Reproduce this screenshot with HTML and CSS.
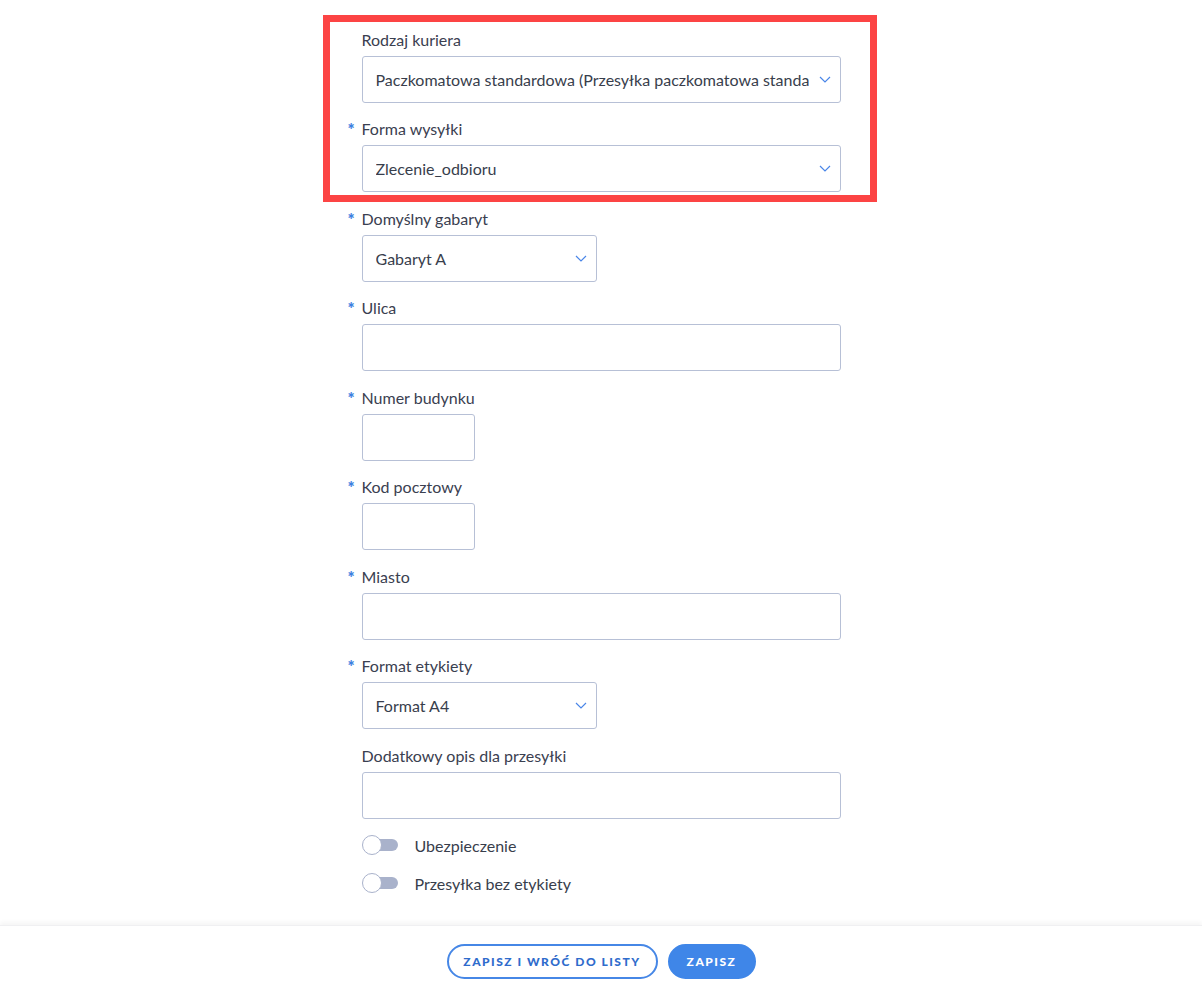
FILE: index.html
```html
<!DOCTYPE html>
<html lang="pl">
<head>
<meta charset="utf-8">
<title>Formularz</title>
<link rel="stylesheet" href="styles.css">
</head>
<body>
<div class="page">
  <form class="form">
    <div class="field">
      <label class="label">Rodzaj kuriera</label>
      <div class="select full">
        <span class="select-text">Paczkomatowa standardowa (Przesyłka paczkomatowa standardowa)</span>
        <svg class="chev" width="12" height="7" viewBox="0 0 12 7"><path d="M1 1l5 5 5-5" fill="none" stroke="#4a86e8" stroke-width="1.2"/></svg>
      </div>
    </div>
    <div class="field">
      <label class="label req">Forma wysyłki</label>
      <div class="select full">
        <span class="select-text">Zlecenie_odbioru</span>
        <svg class="chev" width="12" height="7" viewBox="0 0 12 7"><path d="M1 1l5 5 5-5" fill="none" stroke="#4a86e8" stroke-width="1.2"/></svg>
      </div>
    </div>
    <div class="field">
      <label class="label req">Domyślny gabaryt</label>
      <div class="select half">
        <span class="select-text">Gabaryt A</span>
        <svg class="chev" width="12" height="7" viewBox="0 0 12 7"><path d="M1 1l5 5 5-5" fill="none" stroke="#4a86e8" stroke-width="1.2"/></svg>
      </div>
    </div>
    <div class="field">
      <label class="label req">Ulica</label>
      <div class="input full"></div>
    </div>
    <div class="field">
      <label class="label req">Numer budynku</label>
      <div class="input small"></div>
    </div>
    <div class="field">
      <label class="label req">Kod pocztowy</label>
      <div class="input small"></div>
    </div>
    <div class="field">
      <label class="label req">Miasto</label>
      <div class="input full"></div>
    </div>
    <div class="field">
      <label class="label req">Format etykiety</label>
      <div class="select half">
        <span class="select-text">Format A4</span>
        <svg class="chev" width="12" height="7" viewBox="0 0 12 7"><path d="M1 1l5 5 5-5" fill="none" stroke="#4a86e8" stroke-width="1.2"/></svg>
      </div>
    </div>
    <div class="field">
      <label class="label">Dodatkowy opis dla przesyłki</label>
      <div class="input full"></div>
    </div>
    <div class="toggles">
      <div class="toggle-row"><span class="toggle"><span class="knob"></span></span><span class="toggle-text">Ubezpieczenie</span></div>
      <div class="toggle-row"><span class="toggle"><span class="knob"></span></span><span class="toggle-text">Przesyłka bez etykiety</span></div>
    </div>
    <div class="highlight"></div>
  </form>
  <footer class="footer">
    <button class="btn btn-outline" type="button">Zapisz i wróć do listy</button>
    <button class="btn btn-primary" type="button">Zapisz</button>
  </footer>
</div>
</body>
</html>
```

FILE: styles.css
```css
* { box-sizing: border-box; }
html, body { margin: 0; padding: 0; background: #fff; }
body {
  font-family: "Lato", "Open Sans", sans-serif;
  color: #383e4c;
  font-size: 16px;
}
.page { min-height: 989px; display: flex; flex-direction: column; }
.form {
  position: relative;
  width: 479px;
  margin: 0 auto;
  padding-top: 29.5px;
  display: flex;
  flex-direction: column;
  gap: 16.5px;
}
.field { display: flex; flex-direction: column; gap: 6px; }
.label {
  position: relative;
  line-height: 20px;
  font-size: 16px;
  color: #3a4050;
}
.label.req::before {
  content: "*";
  position: absolute;
  left: -14px;
  top: 1px;
  font-size: 17px;
  color: #3d7fe0;
  font-weight: 900;
}
.select, .input {
  height: 47px;
  border: 1px solid #b7c0d6;
  border-radius: 3px;
  background: #fff;
}
.select {
  display: flex;
  align-items: center;
  padding: 0 9px 0 13px;
  gap: 10px;
}
.select-text {
  flex: 1;
  overflow: hidden;
  white-space: nowrap;
  font-size: 16px;
  color: #383e4c;
}
.chev { flex: none; }
.full { width: 479px; }
.half { width: 235px; }
.small { width: 113px; }
.toggles {
  display: flex;
  flex-direction: column;
  gap: 18px;
  padding-top: 0;
}
.toggle-row { display: flex; align-items: center; height: 20px; }
.toggle {
  position: relative;
  width: 36px;
  height: 20px;
  flex: none;
}
.toggle::before {
  content: "";
  position: absolute;
  left: 10px;
  right: 0;
  top: 4px;
  height: 12px;
  border-radius: 6px;
  background: #a9b2cb;
}
.knob {
  position: absolute;
  left: 0;
  top: 0;
  width: 20px;
  height: 20px;
  border-radius: 50%;
  background: #fff;
  border: 1px solid #a9b2cb;
}
.toggle-text { margin-left: 17px; font-size: 16px; color: #383e4c; }
.highlight {
  position: absolute;
  left: -39px;
  top: 15px;
  width: 554px;
  height: 187px;
  border: 7px solid #fc4444;
  pointer-events: none;
}
.footer {
  margin-top: auto;
  height: 64px;
  padding-top: 18px;
  display: flex;
  justify-content: center;
  align-items: flex-start;
  gap: 10px;
  box-shadow: 0 -3px 4px rgba(0,0,0,0.04);
  border-top: 1px solid #f0f0f2;
}
.btn {
  height: 35px;
  border-radius: 18px;
  font-family: inherit;
  font-weight: 900;
  font-size: 12px;
  letter-spacing: 1.5px;
  text-transform: uppercase;
  cursor: pointer;
  padding: 0;
}
.btn-outline {
  width: 211px;
  background: #fff;
  border: 2px solid #4687e6;
  color: #2f6ccc;
}
.btn-primary {
  width: 88px;
  background: #3f86e8;
  border: 2px solid #3f86e8;
  color: #fff;
}
```
